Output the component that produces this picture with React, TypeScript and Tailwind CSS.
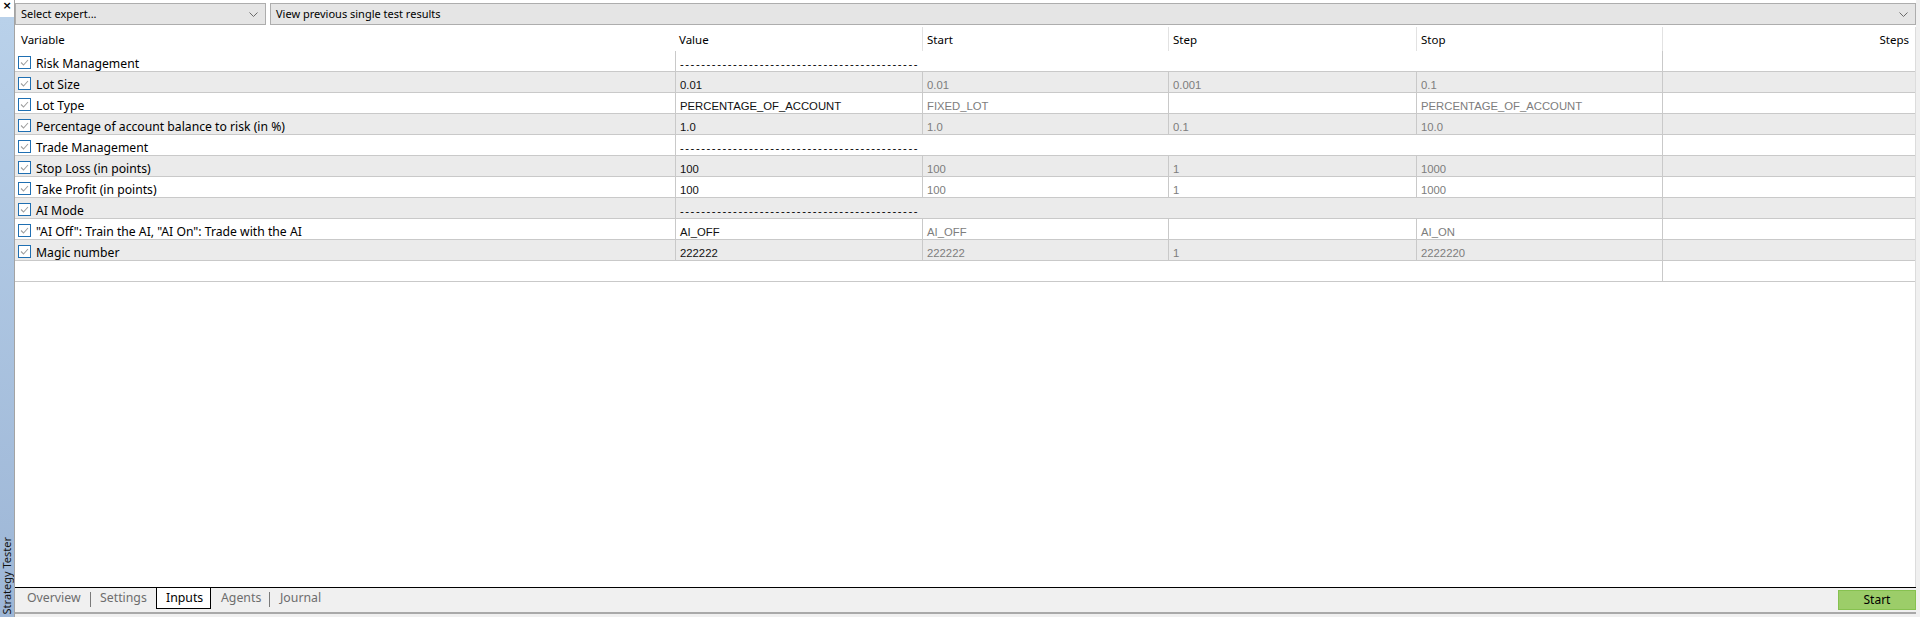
import React from 'react';

type Row = {
  name: string;
  group?: boolean;
  value?: string;
  start?: string;
  step?: string;
  stop?: string;
};

const rows: Row[] = [
  { name: 'Risk Management', group: true },
  { name: 'Lot Size', value: '0.01', start: '0.01', step: '0.001', stop: '0.1' },
  { name: 'Lot Type', value: 'PERCENTAGE_OF_ACCOUNT', start: 'FIXED_LOT', step: '', stop: 'PERCENTAGE_OF_ACCOUNT' },
  { name: 'Percentage of account balance to risk (in %)', value: '1.0', start: '1.0', step: '0.1', stop: '10.0' },
  { name: 'Trade Management', group: true },
  { name: 'Stop Loss (in points)', value: '100', start: '100', step: '1', stop: '1000' },
  { name: 'Take Profit (in points)', value: '100', start: '100', step: '1', stop: '1000' },
  { name: 'AI Mode', group: true },
  { name: '"AI Off": Train the AI, "AI On": Trade with the AI', value: 'AI_OFF', start: 'AI_OFF', step: '', stop: 'AI_ON' },
  { name: 'Magic number', value: '222222', start: '222222', step: '1', stop: '2222220' },
];

const DASHES = '---------------------------------------------';

const uiFont = "font-['Noto_Sans','Open_Sans',sans-serif]";
const cellFont = "font-['Liberation_Sans',Arial,sans-serif] text-[11.3px]";

function Chevron() {
  return (
    <svg width="9" height="5" viewBox="0 0 9 5" className="shrink-0">
      <polyline points="0.5,0.5 4.5,4.5 8.5,0.5" fill="none" stroke="#6b6b6b" strokeWidth="1" />
    </svg>
  );
}

function Combo({ label, className }: { label: string; className: string }) {
  return (
    <div
      className={`h-[22px] bg-[#e5e5e5] border border-[#adadad] flex items-center justify-between pl-[5px] pr-[7px] ${className}`}
    >
      <span className={`${uiFont} text-[11px] text-black`}>{label}</span>
      <Chevron />
    </div>
  );
}

function Check() {
  return (
    <svg width="13" height="13" viewBox="0 0 13 13" className="shrink-0">
      <rect x="0.5" y="0.5" width="12" height="12" fill="#fff" stroke="#1f6fb2" />
      <polyline points="3,6.5 5.5,9 10,4" fill="none" stroke="#a0a0a0" strokeWidth="1.1" />
    </svg>
  );
}

const cols = 'grid grid-cols-[660px_247px_246px_248px_246px_1fr]';
const cell = 'border-l border-[#c9c9c9] pl-[4px] pt-[5px] flex items-center';

export default function App() {
  return (
    <div className="w-[1920px] h-[617px] flex bg-[#f0f0f0] overflow-hidden">
      {/* side caption strip */}
      <div className="w-[15px] flex flex-col border-r border-[#a3a3a3]">
        <div className="h-[17px] bg-white flex justify-center">
          <span className="font-['DejaVu_Sans',sans-serif] text-[11px] font-bold leading-[12px] text-black">×</span>
        </div>
        <div className="flex-1 bg-gradient-to-b from-[#b9d1ea] to-[#9db6d6] flex flex-col justify-end items-center pb-[3px]">
          <span className={`${uiFont} text-[11px] leading-[14px] text-[#111] [writing-mode:vertical-rl] rotate-180 whitespace-nowrap`}>
            Strategy Tester
          </span>
        </div>
      </div>

      <div className="flex-1 flex flex-col pr-[4px]">
        {/* selectors */}
        <div className="h-[27px] bg-white flex gap-[4px] pt-[3px]">
          <Combo label="Select expert..." className="w-[251px]" />
          <Combo label="View previous single test results" className="flex-1" />
        </div>

        {/* inputs table */}
        <div className="flex-1 bg-white border-r border-[#dcdcdc] flex flex-col">
          <div className={`${cols} h-[24px] ${uiFont} text-[11.5px] text-black`}>
            <div className="pl-[6px] pt-[2px] flex items-center">Variable</div>
            <div className="pl-[4px] pt-[2px] flex items-center">Value</div>
            <div className="pl-[4px] pt-[2px] flex items-center border-l border-[#e2e2e2]">Start</div>
            <div className="pl-[4px] pt-[2px] flex items-center border-l border-[#e2e2e2]">Step</div>
            <div className="pl-[4px] pt-[2px] flex items-center border-l border-[#e2e2e2]">Stop</div>
            <div className="pr-[6px] pt-[2px] flex items-center justify-end border-l border-[#e2e2e2]">Steps</div>
          </div>

          {rows.map((r, i) => (
            <div
              key={r.name}
              className={`${cols} h-[21px] border-b border-[#c9c9c9] ${i % 2 === 1 ? 'bg-[#ebebeb]' : 'bg-white'}`}
            >
              <div className={`flex items-center gap-[5px] pl-[3px] ${uiFont} text-[12.2px] text-black whitespace-nowrap`}>
                <Check />
                <span className="pt-[4px]">{r.name}</span>
              </div>
              {r.group ? (
                <div className={`col-span-4 ${cell} ${cellFont} text-black tracking-[1.55px]`}>{DASHES}</div>
              ) : (
                <>
                  <div className={`${cell} ${cellFont} text-[#111]`}>{r.value}</div>
                  <div className={`${cell} ${cellFont} text-[#7d7d7d]`}>{r.start}</div>
                  <div className={`${cell} ${cellFont} text-[#7d7d7d]`}>{r.step}</div>
                  <div className={`${cell} ${cellFont} text-[#7d7d7d]`}>{r.stop}</div>
                </>
              )}
              <div className="border-l border-[#c9c9c9]" />
            </div>
          ))}
          <div className={`${cols} h-[21px] border-b border-[#c9c9c9] bg-white`}>
            <div className="col-span-5" />
            <div className="border-l border-[#c9c9c9]" />
          </div>
        </div>

        {/* tabs */}
        <div className="h-[25px] border-t border-black flex items-start justify-between">
          <div className={`flex items-start ${uiFont} text-[12.3px] text-[#6d6d6d]`}>
            <div className="w-[75px] h-[21px] pl-[12px] flex items-center">Overview</div>
            <div className="w-px h-[15px] bg-[#7a7a7a] mt-[4px]" />
            <div className="w-[65px] h-[21px] pl-[9px] flex items-center">Settings</div>
            <div className="w-[55px] h-[21px] pl-[9px] flex items-center bg-white text-black border-x border-b border-black">Inputs</div>
            <div className="w-[58px] h-[21px] pl-[10px] flex items-center">Agents</div>
            <div className="w-px h-[15px] bg-[#7a7a7a] mt-[4px]" />
            <div className="h-[21px] pl-[10px] flex items-center">Journal</div>
          </div>
          <button
            className={`mt-[2px] w-[78px] h-[20px] bg-[#9ccd69] border border-[#86c14f] ${uiFont} text-[12px] text-black flex items-center justify-center`}
          >
            Start
          </button>
        </div>
        <div className="h-[5px] border-t-2 border-[#a9a9a9] bg-[#f0f0f0]" />
      </div>
    </div>
  );
}
